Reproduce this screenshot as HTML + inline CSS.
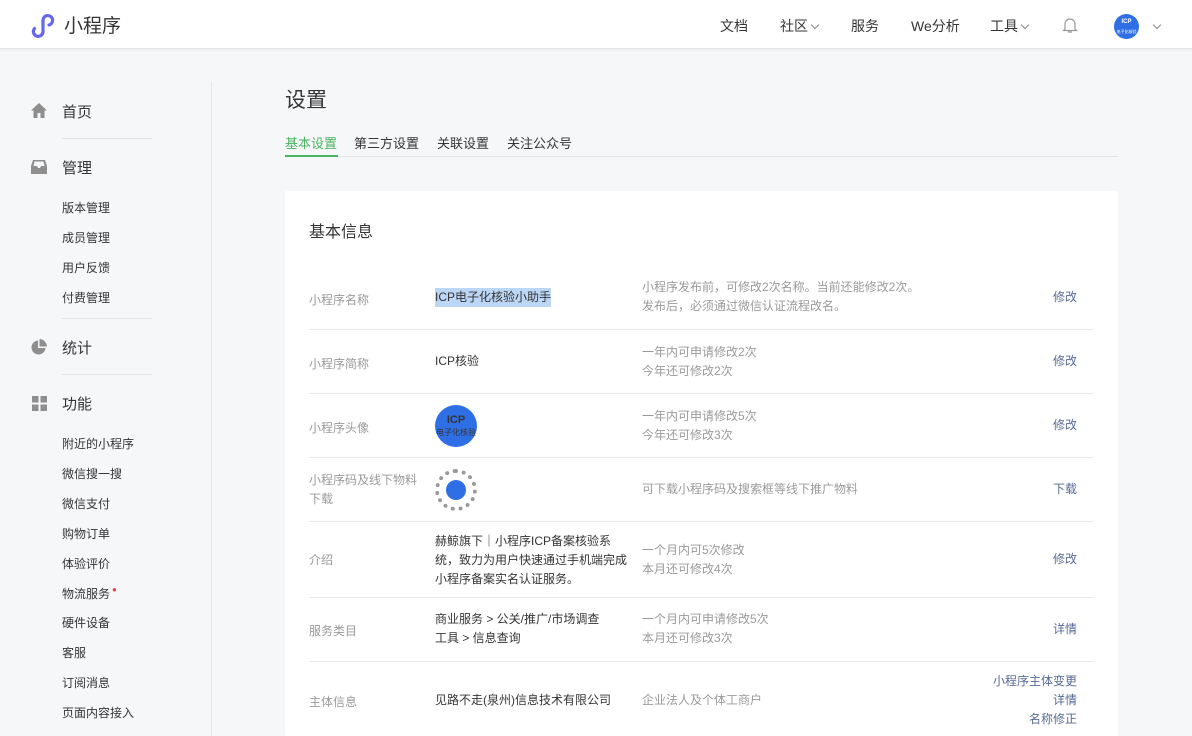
<!DOCTYPE html>
<html><head><meta charset="utf-8"><style>
*{box-sizing:border-box;margin:0;padding:0}
html,body{width:1192px;height:736px;overflow:hidden}
body{background:#f6f7f9;font-family:"Liberation Sans","Noto Sans CJK SC",sans-serif;color:#353535;position:relative}
.hdr{position:absolute;left:0;top:0;width:1192px;height:49px;background:#fff;border-bottom:1px solid #e4e5e8;box-shadow:0 1px 2px rgba(0,0,0,.04)}
.a{position:absolute;white-space:nowrap}
.nav{font-size:14px;color:#353535;top:16px}
.chev{display:inline-block;width:6px;height:6px;border-right:1px solid #888;border-bottom:1px solid #888;transform:rotate(45deg);margin-left:4px;position:relative;top:-3px}
.side{position:absolute;left:211px;top:82px;width:1px;height:660px;background:#e7e8eb}
.st{font-size:15px;color:#353535}
.ss{font-size:12px;color:#353535}
.sl{position:absolute;left:62px;width:90px;height:1px;background:#e4e5e8}
.card{position:absolute;left:285px;top:191px;width:833px;height:545px;background:#fff;border-radius:2px}
.row{position:absolute;left:24px;width:784px;border-bottom:1px solid #e7e8eb;font-size:12px}
.row .l{position:absolute;left:0;color:#9a9a9a}
.row .v{position:absolute;left:126px;color:#353535;line-height:19px}
.row .d{position:absolute;left:333px;color:#9a9a9a;line-height:19px}
.row .r{position:absolute;right:16px;color:#576b95;text-align:right;line-height:19px}
.av{width:42px;height:42px;border-radius:50%;background:#2f6fe6;color:#fff;text-align:center}
</style></head><body>
<div class="hdr">
<svg class="a" style="left:30px;top:12px" width="28" height="26" viewBox="0 0 28 26"><path d="M4.5 16.5A4.8 4.8 0 1 0 13 19.5V8.5A4.8 4.8 0 1 1 19 13" fill="none" stroke="#6467f0" stroke-width="3.2" stroke-linecap="round"/></svg>
<div class="a" style="left:64px;top:11px;font-size:19px;color:#353535">小程序</div>
<div class="a nav" style="left:720px">文档</div>
<div class="a nav" style="left:780px">社区<span class="chev"></span></div>
<div class="a nav" style="left:851px">服务</div>
<div class="a nav" style="left:911px">We分析</div>
<div class="a nav" style="left:990px">工具<span class="chev"></span></div>
<svg class="a" style="left:1062px;top:16px" width="16" height="18" viewBox="0 0 16 18"><path d="M3 13V8a5 5 0 0 1 10 0v5l1.5 1.5h-13zM6 16h4" fill="none" stroke="#999" stroke-width="1.2"/></svg>
<div class="a" style="left:1114px;top:14px;width:25px;height:25px;border-radius:50%;background:#2f6fe6;color:#fff;font-size:6px;text-align:center;line-height:9px;padding-top:4px;font-weight:bold">ICP<br><span style="font-size:4px;font-weight:normal">电子化核验</span></div>
<div class="a" style="left:1150px;top:18px"><span class="chev"></span></div>
</div>

<div class="side"></div>
<svg class="a" style="left:30px;top:102px" width="18" height="17" viewBox="0 0 18 17"><path d="M9 1L1 8.5h2.5V16h4v-5h3v5h4V8.5H17z" fill="#8e8e8e"/></svg>
<div class="a st" style="left:62px;top:101px">首页</div>
<div class="sl" style="top:138px"></div>
<svg class="a" style="left:31px;top:160px" width="16" height="14" viewBox="0 0 16 14"><path d="M2 0h12l2 6v8H0V6zM2.5 6h3.5l1 2h2l1-2h3.5L12.5 1.5h-9z" fill="#8e8e8e" fill-rule="evenodd"/></svg>
<div class="a st" style="left:62px;top:157px">管理</div>
<div class="a ss" style="left:62px;top:199px">版本管理</div>
<div class="a ss" style="left:62px;top:229px">成员管理</div>
<div class="a ss" style="left:62px;top:259px">用户反馈</div>
<div class="a ss" style="left:62px;top:289px">付费管理</div>
<div class="sl" style="top:318px"></div>
<svg class="a" style="left:31px;top:339px" width="16" height="16" viewBox="0 0 16 16"><path d="M7 1.5A7 7 0 1 0 14.5 9H7z" fill="#8e8e8e"/><path d="M8.5 0v7.5H16A8 8 0 0 0 8.5 0z" fill="#8e8e8e"/></svg>
<div class="a st" style="left:62px;top:337px">统计</div>
<div class="sl" style="top:374px"></div>
<svg class="a" style="left:32px;top:396px" width="15" height="15" viewBox="0 0 15 15"><g fill="#8e8e8e"><rect width="6.5" height="6.5"/><rect x="8.5" width="6.5" height="6.5"/><rect y="8.5" width="6.5" height="6.5"/><rect x="8.5" y="8.5" width="6.5" height="6.5"/></g></svg>
<div class="a st" style="left:62px;top:393px">功能</div>
<div class="a ss" style="left:62px;top:435px">附近的小程序</div>
<div class="a ss" style="left:62px;top:465px">微信搜一搜</div>
<div class="a ss" style="left:62px;top:495px">微信支付</div>
<div class="a ss" style="left:62px;top:525px">购物订单</div>
<div class="a ss" style="left:62px;top:555px">体验评价</div>
<div class="a ss" style="left:62px;top:585px">物流服务<span style="color:#e64340;font-size:8px;vertical-align:top;margin-left:2px">●</span></div>
<div class="a ss" style="left:62px;top:614px">硬件设备</div>
<div class="a ss" style="left:62px;top:644px">客服</div>
<div class="a ss" style="left:62px;top:674px">订阅消息</div>
<div class="a ss" style="left:62px;top:704px">页面内容接入</div>

<div class="a" style="left:285px;top:84px;font-size:21px;color:#353535">设置</div>
<div class="a" style="left:285px;top:156px;width:833px;height:1px;background:#e4e5e8"></div>
<div class="a" style="left:285px;top:133px;font-size:13px;color:#4bb362">基本设置</div>
<div class="a" style="left:285px;top:155px;width:53px;height:2px;background:#4bb362"></div>
<div class="a" style="left:354px;top:133px;font-size:13px">第三方设置</div>
<div class="a" style="left:437px;top:133px;font-size:13px">关联设置</div>
<div class="a" style="left:507px;top:133px;font-size:13px">关注公众号</div>

<div class="card">
<div class="a" style="left:24px;top:27px;font-size:16px;color:#353535">基本信息</div>
<div class="row" style="top:75px;height:64px"><div class="l" style="top:25px">小程序名称</div><div class="v" style="top:22px;background:#bcd6f6">ICP电子化核验小助手</div><div class="d" style="top:12px">小程序发布前，可修改2次名称。当前还能修改2次。<br>发布后，必须通过微信认证流程改名。</div><div class="r" style="top:22px">修改</div></div>
<div class="row" style="top:139px;height:64px"><div class="l" style="top:25px">小程序简称</div><div class="v" style="top:22px">ICP核验</div><div class="d" style="top:13px">一年内可申请修改2次<br>今年还可修改2次</div><div class="r" style="top:22px">修改</div></div>
<div class="row" style="top:203px;height:64px"><div class="l" style="top:25px">小程序头像</div><div class="v av" style="top:11px;font-size:11px;line-height:12px;padding-top:9px;font-weight:bold">ICP<br><span style="font-size:8px;font-weight:normal">电子化核验</span></div><div class="d" style="top:13px">一年内可申请修改5次<br>今年还可修改3次</div><div class="r" style="top:22px">修改</div></div>
<div class="row" style="top:267px;height:64px"><div class="l" style="top:13px;line-height:19px">小程序码及线下物料<br>下载</div><div class="v" style="top:11px;width:42px;height:42px;border-radius:50%;border:4px dotted #999;"><div style="margin:7px auto 0;width:20px;height:20px;border-radius:50%;background:#2f6fe6"></div></div><div class="d" style="top:22px">可下载小程序码及搜索框等线下推广物料</div><div class="r" style="top:22px">下载</div></div>
<div class="row" style="top:331px;height:76px"><div class="l" style="top:29px">介绍</div><div class="v" style="top:10px">赫鲸旗下｜小程序ICP备案核验系<br>统，致力为用户快速通过手机端完成<br>小程序备案实名认证服务。</div><div class="d" style="top:19px">一个月内可5次修改<br>本月还可修改4次</div><div class="r" style="top:28px">修改</div></div>
<div class="row" style="top:407px;height:64px"><div class="l" style="top:24px">服务类目</div><div class="v" style="top:12px">商业服务 &gt; 公关/推广/市场调查<br>工具 &gt; 信息查询</div><div class="d" style="top:12px">一个月内可申请修改5次<br>本月还可修改3次</div><div class="r" style="top:22px">详情</div></div>
<div class="row" style="top:471px;height:74px;border:none"><div class="l" style="top:31px">主体信息</div><div class="v" style="top:29px">见路不走(泉州)信息技术有限公司</div><div class="d" style="top:29px">企业法人及个体工商户</div><div class="r" style="top:10px">小程序主体变更<br>详情<br>名称修正</div></div>
</div>
</body></html>
